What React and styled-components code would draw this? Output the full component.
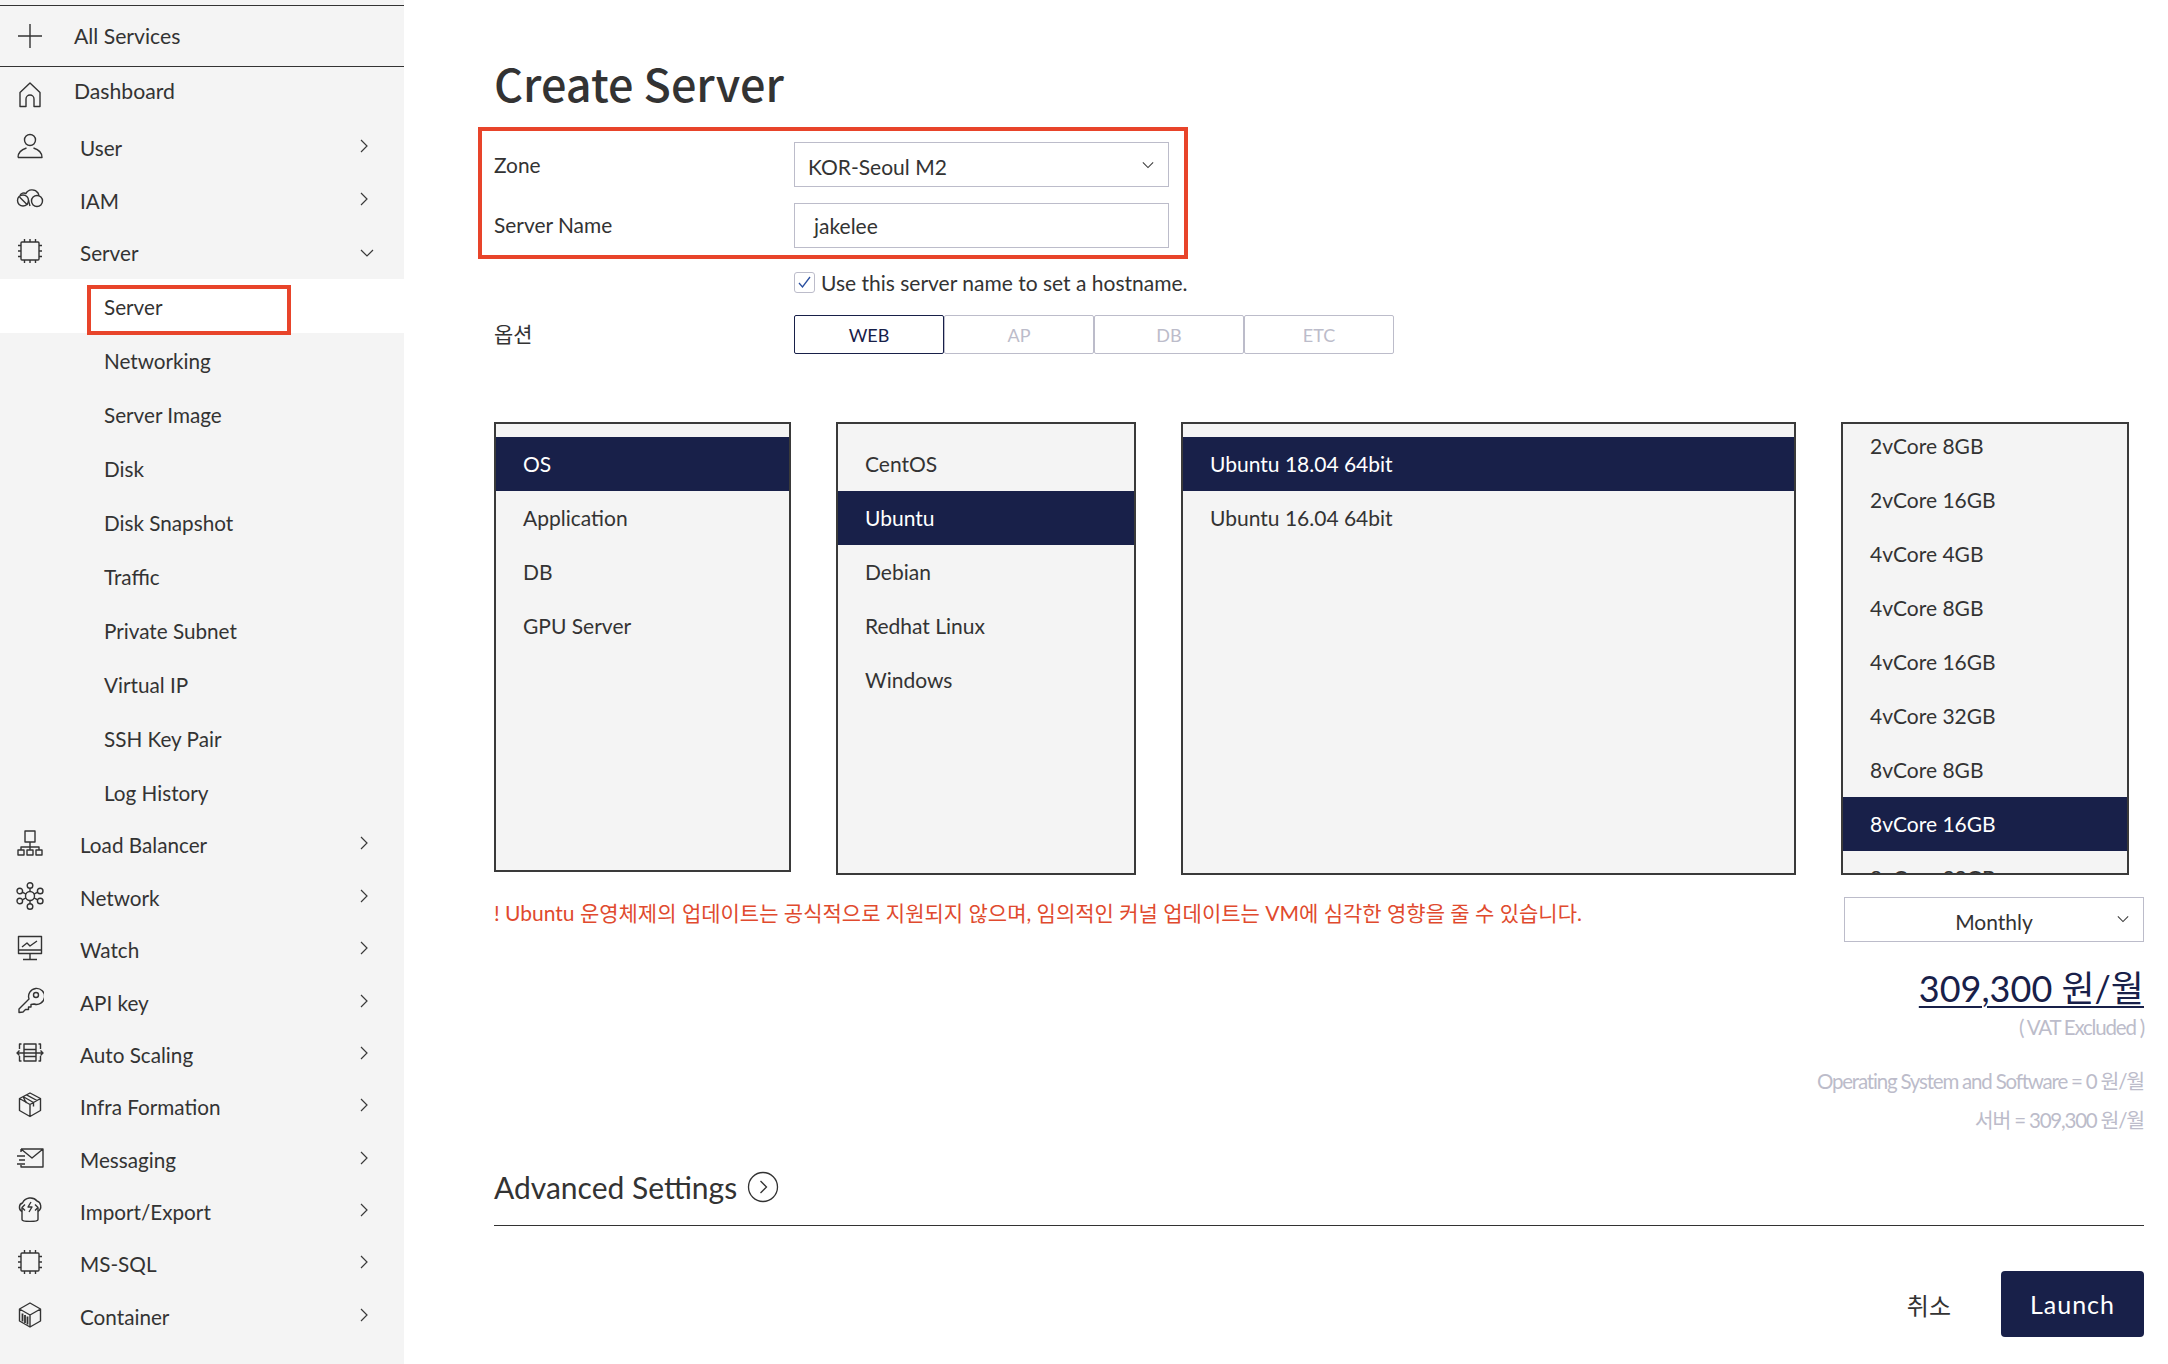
import styled, { createGlobalStyle } from 'styled-components';

const NAVY = '#182049';
const TEXT = '#333333';
const GREY = '#bcbcca';
const RED = '#e8442a';

const GlobalStyle = createGlobalStyle`
  html, body { margin: 0; padding: 0; background: #fff; }
  body { font-family: Lato, "Noto Sans CJK KR", sans-serif; color: ${TEXT}; }
  * { box-sizing: border-box; }
`;

const Glyph = ({ children, className }) => (
  <svg className={className} width="28" height="28" viewBox="0 0 28 28" fill="none" stroke="#333" strokeWidth="1.4" strokeLinejoin="round">
    {children}
  </svg>
);

const PlusIcon = () => <Glyph><path d="M2 14h24M14 2v24" /></Glyph>;
const HomeIcon = () => <Glyph><path d="M4 25.500V11.500L14 2l10 9.500v14h-6v-7.500a4 4 0 0 0-8 0v7.500Z" /></Glyph>;
const UserIcon = () => (
  <Glyph>
    <circle cx="14" cy="8" r="5.500" />
    <path d="M2 25.500h24c0-5-3.500-8-8.500-9.500M2 25.500c0-5 3.500-8 8.500-9.500" />
  </Glyph>
);
const CloudIcon = () => (
  <Glyph>
    <circle cx="7" cy="15.500" r="5.500" />
    <circle cx="21" cy="16" r="5.500" />
    <path d="M4 10.500C5 8 8 7.500 10 8.500 12 4 19 3.500 22 8c1 1.500 1 2 .5 2.800M3.500 12l8 8M12.500 15.500c.5 2 1 4 1.500 5.500" />
  </Glyph>
);
const ChipIcon = () => (
  <Glyph>
    <rect x="5" y="5" width="18" height="18" rx="1" />
    <path d="M8.500 5V2M14 5V2M19.500 5V2M8.500 26v-3M14 26v-3M19.500 26v-3M2 8.500h3M2 14h3M2 19.500h3M23 8.500h3M23 14h3M23 19.500h3" />
  </Glyph>
);
const BalancerIcon = () => (
  <Glyph>
    <rect x="9" y="2" width="10" height="11" />
    <path d="M14 13v5M5 21v-3h18v3M14 18v3" />
    <rect x="2" y="21" width="6" height="5" />
    <rect x="11" y="21" width="6" height="5" />
    <rect x="20" y="21" width="6" height="5" />
  </Glyph>
);
const NetworkIcon = () => (
  <Glyph>
    <circle cx="14" cy="14" r="4.500" />
    <circle cx="14" cy="3.500" r="2.800" />
    <circle cx="14" cy="24.500" r="2.800" />
    <circle cx="3.800" cy="9" r="2.800" />
    <circle cx="24.200" cy="9" r="2.800" />
    <circle cx="3.800" cy="19" r="2.800" />
    <circle cx="24.200" cy="19" r="2.800" />
    <path d="M14 6.300v3.200M14 18.500v3.200M6.300 10.200l3.700 2M21.700 10.200l-3.700 2M6.300 17.800l3.700-2M21.700 17.800l-3.700-2" />
  </Glyph>
);
const WatchIcon = () => (
  <Glyph>
    <rect x="2.500" y="2.500" width="23" height="17" />
    <path d="M6 13l5-4 3 3 7-5M14 19.500v6M7 25.500h14M2.500 16h23" />
  </Glyph>
);
const KeyIcon = () => (
  <Glyph>
    <path d="M3 25.500v-3.500L13 12a8 8 0 1 1 5 5l-3 .5v2.500h-2.500v2.500h-3l-2.500 2.500Z" />
    <circle cx="20" cy="8" r="2.500" />
  </Glyph>
);
const ScalingIcon = () => (
  <Glyph>
    <rect x="8" y="5" width="12" height="17" />
    <path d="M1 14h26M3.500 11.500 1 14l2.500 2.500M24.500 11.500 27 14l-2.500 2.500M5.500 5h-2v5M5.500 22h-2v-5M22.500 5h2v5M22.500 22h2v-5M8 10.500h12M8 17.500h12" />
  </Glyph>
);
const BoxIcon = () => (
  <Glyph>
    <path d="M14 2l10.500 5.500v12L14 25.500 3.500 19.500v-12ZM3.500 7.500 14 13.500l10.500-6M14 13.500v12M7 5.500l10.500 6v4M10.500 3.800 21 9.500M7 5.500l3 6 1-.5" />
  </Glyph>
);
const MailIcon = () => (
  <Glyph>
    <path d="M5 5h22v18H5v-2M5 5l11 9L27 5M5 5v3M1 12h8M3 16h6M1 20h8" />
  </Glyph>
);
const ImportIcon = () => (
  <Glyph>
    <path d="M6 15.500C2.500 14 2.500 8 6.500 7 9 1.500 17 0 21 5c4 1 5.500 7.500 1 10.500" />
    <path d="M6 12v11.500c0 2.500 16 2.500 16 0V12" />
    <path d="M15 6l-3 5h4l-3 5M9 8.500l-3 3 3 3M19 8.500l3 3-3 3" />
  </Glyph>
);
const ContainerIcon = () => (
  <Glyph>
    <path d="M14 2l10.500 6v12L14 26 3.500 20V8ZM3.500 8 14 14l10.500-6M14 14v12" />
    <path strokeWidth="1.800" d="M6.500 12.500v8M9 14v8M11.500 15.500v8" />
  </Glyph>
);

const Chevron = styled.svg.attrs({ viewBox: '0 0 8 14', fill: 'none', stroke: '#3a3a3a', strokeWidth: 1.200 })`
  width: 8px;
  height: 14px;
  flex: none;
`;
const ChevronRight = () => <Chevron><path d="M1 1l6 6-6 6" /></Chevron>;

const ChevronDown = styled.svg.attrs({ viewBox: '0 0 14 8', fill: 'none', stroke: '#3a3a3a', strokeWidth: 1.200 })`
  width: ${p => p.$size || 14}px;
  height: 8px;
  flex: none;
`;
const DownPath = () => <path d="M1 1l6 6 6-6" />;

const Page = styled.div`
  display: flex;
  width: 2168px;
  height: 1364px;
  overflow: hidden;
`;

const Sidebar = styled.nav`
  width: 404px;
  flex: none;
  background: #f4f4f4;
  padding-top: 5px;
  font-size: 20.700px;
`;

const AllServices = styled.div`
  display: flex;
  align-items: center;
  height: 62px;
  padding-left: 16px;
  gap: 30px;
  font-size: 21.200px;
  border-top: 1.500px solid #333;
  border-bottom: 1.500px solid #333;
`;

const DashboardRow = styled.div`
  display: flex;
  align-items: center;
  height: 55px;
  padding: 0 0 7px 16px;
  gap: 30px;
  font-size: 21.200px;
  svg { margin-top: 8px; }
`;

const NavRow = styled.div`
  display: flex;
  align-items: center;
  height: 52.400px;
  padding: 0 30px 0 16px;
  svg:first-child { margin-top: -4px; }
`;

const NavLabel = styled.span`
  margin-left: 36px;
  flex: 1;
`;

const NavArrow = styled.span`
  display: flex;
  align-items: center;
  width: 14px;
  margin-top: ${p => (p.$open ? 5 : 0)}px;
`;

const SubRow = styled.div`
  height: 54px;
  background: ${p => (p.$active ? '#fff' : 'transparent')};
  padding: ${p => (p.$active ? '6px 0 0 87px' : '0 0 0 104px')};
  display: flex;
  align-items: ${p => (p.$active ? 'flex-start' : 'center')};
  span { margin-top: ${p => (p.$active ? '0' : '2px')}; }
`;

const MarkedLabel = styled.div`
  display: flex;
  align-items: center;
  width: 204px;
  height: 50px;
  padding: 0 0 6px 13px;
  border: 4px solid ${RED};
`;

const Main = styled.main`
  flex: 1;
  padding: 53px 24px 0 90px;
  display: flex;
  flex-direction: column;
  min-width: 0;
`;

const Title = styled.h1`
  margin: 0;
  height: 74px;
  font-family: "Noto Sans CJK KR", sans-serif;
  font-size: 45px;
  font-weight: 500;
  line-height: 60px;
  color: ${TEXT};
`;

const MarkedForm = styled.section`
  width: 710px;
  height: 132px;
  margin-left: -16px;
  padding: 11px 0 0 12px;
  border: 4px solid ${RED};
  display: flex;
  flex-direction: column;
  gap: 16px;
`;

const FormRow = styled.div`
  display: flex;
  align-items: center;
`;

const FormLabel = styled.label`
  width: 300px;
  flex: none;
  font-size: 20.900px;
  margin-top: ${p => p.$top}px;
`;

const Select = styled.div`
  display: flex;
  align-items: center;
  justify-content: space-between;
  width: ${p => p.$width}px;
  height: ${p => p.$height}px;
  border: 1.500px solid ${GREY};
  background: #fff;
  padding: 0 14px 0 13px;
  font-size: 21px;
  svg { margin-top: 1px; }
  span { margin-top: 3px; }
`;

const TextInput = styled.div`
  display: flex;
  align-items: center;
  width: 375px;
  height: 45px;
  border: 1.500px solid ${GREY};
  padding-left: 19px;
  font-size: 21px;
`;

const CheckRow = styled.div`
  display: flex;
  align-items: center;
  gap: 6px;
  margin: 13px 0 0 300px;
  font-size: 21px;
  height: 21px;
`;

const CheckBox = styled.span`
  display: flex;
  align-items: center;
  justify-content: center;
  width: 21px;
  height: 21px;
  border: 1.500px solid ${GREY};
  border-radius: 3px;
`;

const OptionRow = styled.div`
  display: flex;
  align-items: center;
  margin-top: 22px;
`;

const Tabs = styled.div`
  display: flex;
`;

const Tab = styled.div`
  width: 150px;
  height: 39px;
  display: flex;
  align-items: center;
  justify-content: center;
  border: 1.500px solid ${p => (p.$active ? NAVY : GREY)};
  border-radius: 2px;
  font-size: 18px;
  color: ${p => (p.$active ? NAVY : GREY)};
`;

const Lists = styled.div`
  display: flex;
  margin-top: 68px;
`;

const ListBox = styled.div`
  width: ${p => p.$width}px;
  height: ${p => p.$height}px;
  margin-right: ${p => p.$gap}px;
  flex: none;
  background: #f4f4f4;
  border: 2px solid #3a3a3a;
  padding-top: ${p => (p.$scrolled ? 0 : 13)}px;
  overflow: hidden;
`;

const ListInner = styled.div`
  margin-top: ${p => (p.$scrolled ? -5 : 0)}px;
`;

const ListRow = styled.div`
  height: 54px;
  display: flex;
  align-items: center;
  padding: 0 0 2px 27px;
  font-size: 21px;
  background: ${p => (p.$active ? NAVY : 'transparent')};
  color: ${p => (p.$active ? '#fff' : TEXT)};
`;

const Bottom = styled.div`
  display: flex;
  justify-content: space-between;
  margin-top: 22px;
`;

const Warning = styled.p`
  margin: 0;
  font-size: 21px;
  color: #e04a2e;
`;

const Summary = styled.div`
  display: flex;
  flex-direction: column;
  align-items: flex-end;
`;

const MonthlySelect = styled(Select)`
  position: relative;
  justify-content: center;
  padding: 0;
  svg { position: absolute; right: 14px; top: 17px; margin: 0; }
`;

const Price = styled.div`
  margin-top: 16px;
  height: 60px;
  line-height: 60px;
  font-size: 36px;
  color: ${NAVY};
  text-decoration: underline;
  text-underline-offset: 4px;
  text-decoration-thickness: 2px;
`;

const Note = styled.div`
  height: ${p => p.$height}px;
  line-height: ${p => p.$height}px;
  font-size: 20.500px;
  letter-spacing: -1.200px;
  color: ${GREY};
  margin-top: ${p => p.$top || 0}px;
`;

const AdvancedRow = styled.div`
  display: flex;
  align-items: center;
  gap: 10px;
  height: 87px;
  padding-top: 10px;
  border-bottom: 1.500px solid #333;
  font-size: 30px;
  color: ${TEXT};
`;

const Actions = styled.div`
  display: flex;
  align-items: center;
  justify-content: flex-end;
  gap: 50px;
  margin-top: 45px;
`;

const Cancel = styled.span`
  font-size: 24px;
`;

const LaunchButton = styled.button`
  width: 143px;
  height: 66px;
  border: 0;
  border-radius: 4px;
  background: ${NAVY};
  color: #fff;
  font-family: inherit;
  font-size: 25px;
  letter-spacing: 1px;
`;

const NAV_TOP = [
  { label: 'User', Icon: UserIcon },
  { label: 'IAM', Icon: CloudIcon },
];
const NAV_BOTTOM = [
  { label: 'Load Balancer', Icon: BalancerIcon },
  { label: 'Network', Icon: NetworkIcon },
  { label: 'Watch', Icon: WatchIcon },
  { label: 'API key', Icon: KeyIcon },
  { label: 'Auto Scaling', Icon: ScalingIcon },
  { label: 'Infra Formation', Icon: BoxIcon },
  { label: 'Messaging', Icon: MailIcon },
  { label: 'Import/Export', Icon: ImportIcon },
  { label: 'MS-SQL', Icon: ChipIcon },
  { label: 'Container', Icon: ContainerIcon },
];
const SUB_ITEMS = ['Networking', 'Server Image', 'Disk', 'Disk Snapshot', 'Traffic', 'Private Subnet', 'Virtual IP', 'SSH Key Pair', 'Log History'];

const LISTS = [
  { width: 297, height: 450, gap: 45, active: 'OS', items: ['OS', 'Application', 'DB', 'GPU Server'] },
  { width: 300, height: 453, gap: 45, active: 'Ubuntu', items: ['CentOS', 'Ubuntu', 'Debian', 'Redhat Linux', 'Windows'] },
  { width: 615, height: 453, gap: 45, active: 'Ubuntu 18.04 64bit', items: ['Ubuntu 18.04 64bit', 'Ubuntu 16.04 64bit'] },
  {
    width: 288, height: 453, gap: 0, active: '8vCore 16GB', scrolled: true,
    items: ['2vCore 8GB', '2vCore 16GB', '4vCore 4GB', '4vCore 8GB', '4vCore 16GB', '4vCore 32GB', '8vCore 8GB', '8vCore 16GB', '8vCore 32GB'],
  },
];

function NavItem({ label, Icon, open }) {
  return (
    <NavRow>
      <Icon />
      <NavLabel>{label}</NavLabel>
      <NavArrow $open={open}>
        {open ? <ChevronDown><DownPath /></ChevronDown> : <ChevronRight />}
      </NavArrow>
    </NavRow>
  );
}

function App() {
  return (
    <Page>
      <GlobalStyle />
      <Sidebar>
        <AllServices><PlusIcon /><span>All Services</span></AllServices>
        <DashboardRow><HomeIcon /><span>Dashboard</span></DashboardRow>
        {NAV_TOP.map(item => <NavItem key={item.label} {...item} />)}
        <NavItem label="Server" Icon={ChipIcon} open />
        <SubRow $active><MarkedLabel>Server</MarkedLabel></SubRow>
        {SUB_ITEMS.map(label => <SubRow key={label}><span>{label}</span></SubRow>)}
        {NAV_BOTTOM.map(item => <NavItem key={item.label} {...item} />)}
      </Sidebar>

      <Main>
        <Title>Create Server</Title>
        <MarkedForm>
          <FormRow>
            <FormLabel $top={0}>Zone</FormLabel>
            <Select $width={375} $height={45}>
              <span>KOR-Seoul M2</span>
              <ChevronDown $size={12}><DownPath /></ChevronDown>
            </Select>
          </FormRow>
          <FormRow>
            <FormLabel $top={-2}>Server Name</FormLabel>
            <TextInput><span>jakelee</span></TextInput>
          </FormRow>
        </MarkedForm>

        <CheckRow>
          <CheckBox>
            <svg width="15" height="15" viewBox="0 0 15 15" fill="none" stroke="#2a4fa0" strokeWidth="1.300">
              <path d="M2 8l3.500 4L13 2" />
            </svg>
          </CheckBox>
          <span>Use this server name to set a hostname.</span>
        </CheckRow>

        <OptionRow>
          <FormLabel $top={-4}>옵션</FormLabel>
          <Tabs>
            <Tab $active>WEB</Tab>
            <Tab>AP</Tab>
            <Tab>DB</Tab>
            <Tab>ETC</Tab>
          </Tabs>
        </OptionRow>

        <Lists>
          {LISTS.map(list => (
            <ListBox key={list.active} $width={list.width} $height={list.height} $gap={list.gap} $scrolled={list.scrolled}>
              <ListInner $scrolled={list.scrolled}>
                {list.items.map(item => (
                  <ListRow key={item} $active={item === list.active}>{item}</ListRow>
                ))}
              </ListInner>
            </ListBox>
          ))}
        </Lists>

        <Bottom>
          <Warning>! Ubuntu 운영체제의 업데이트는 공식적으로 지원되지 않으며, 임의적인 커널 업데이트는 VM에 심각한 영향을 줄 수 있습니다.</Warning>
          <Summary>
            <MonthlySelect $width={300} $height={45}>
              <span>Monthly</span>
              <ChevronDown $size={12}><DownPath /></ChevronDown>
            </MonthlySelect>
            <Price>309,300 원/월</Price>
            <Note $height={19}>( VAT Excluded )</Note>
            <Note $height={38} $top={25}>Operating System and Software = 0 원/월</Note>
            <Note $height={38} $top={1}>서버 = 309,300 원/월</Note>
          </Summary>
        </Bottom>

        <AdvancedRow>
          <span>Advanced Settings</span>
          <svg width="32" height="32" viewBox="0 0 32 32" fill="none" stroke="#333" strokeWidth="1.300">
            <circle cx="16" cy="16" r="14.500" />
            <path d="M13.500 10l6 6-6 6" />
          </svg>
        </AdvancedRow>

        <Actions>
          <Cancel>취소</Cancel>
          <LaunchButton>Launch</LaunchButton>
        </Actions>
      </Main>
    </Page>
  );
}

export default App;
